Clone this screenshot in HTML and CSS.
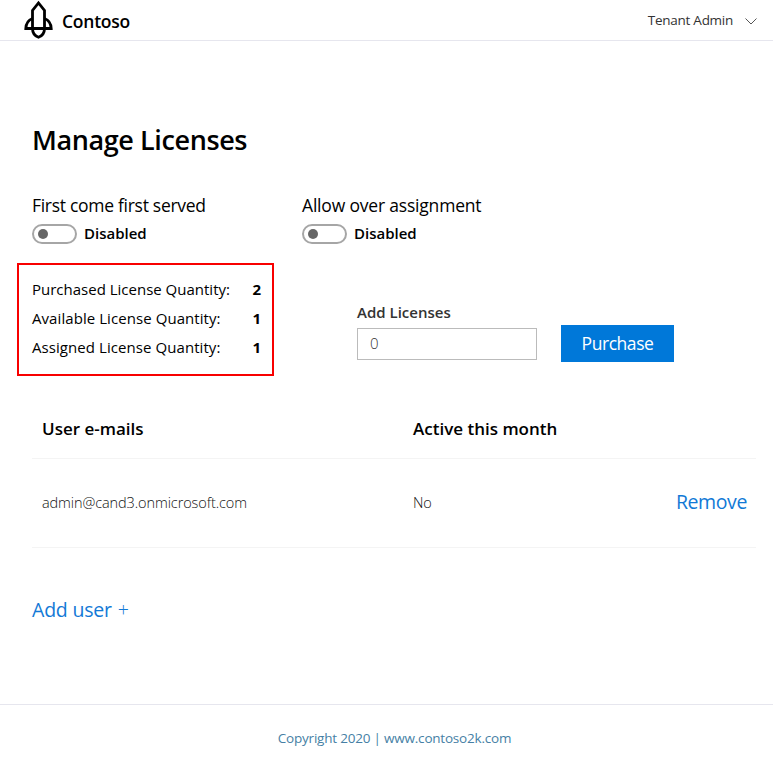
FILE: index.html
```html
<!DOCTYPE html>
<html lang="en">
<head>
<meta charset="utf-8">
<title>Manage Licenses</title>
<link rel="stylesheet" href="styles.css">
</head>
<body>
<header class="topbar">
  <div class="brand">
    <svg class="logo" width="30" height="40" viewBox="0 0 30 40" fill="none" stroke="#000" stroke-width="2.8">
      <path d="M8.500 28.500V10.500L14.500 3L20.500 10.500V28.500"/>
      <path d="M8.500 18.500C4.500 20 2 24 1.800 28.500H27.200C27 24 24.500 20 20.500 18.500"/>
      <path d="M8.500 28.500C8.500 33 11 36 14.500 37.300C18 36 20.500 33 20.500 28.500"/>
    </svg>
    <span class="brand-name">Contoso</span>
  </div>
  <div class="account">
    <span class="account-name">Tenant Admin</span>
    <svg width="12" height="7" viewBox="0 0 12 7" fill="none" stroke="#555" stroke-width="1"><path d="M0.500 0.500L6 6L11.500 0.500"/></svg>
  </div>
</header>
<main class="page">
  <h1 class="title">Manage Licenses</h1>
  <section class="settings">
    <div class="setting">
      <div class="setting-label">First come first served</div>
      <div class="toggle-row"><div class="toggle"></div><span class="toggle-text">Disabled</span></div>
    </div>
    <div class="setting">
      <div class="setting-label setting-label-wide">Allow over assignment</div>
      <div class="toggle-row"><div class="toggle"></div><span class="toggle-text">Disabled</span></div>
    </div>
  </section>
  <section class="licenses">
    <dl class="quantities">
      <div class="quantity"><dt>Purchased License Quantity:</dt><dd>2</dd></div>
      <div class="quantity quantity-wide"><dt>Available License Quantity:</dt><dd>1</dd></div>
      <div class="quantity quantity-wide"><dt>Assigned License Quantity:</dt><dd>1</dd></div>
    </dl>
    <div class="add">
      <label class="add-label" for="count">Add Licenses</label>
      <input class="add-input" id="count" type="text" value="0">
    </div>
    <button class="purchase" type="button">Purchase</button>
  </section>
  <section class="users">
    <div class="row head"><span>User e-mails</span><span>Active this month</span></div>
    <div class="row user"><span>admin@cand3.onmicrosoft.com</span><span>No</span><a class="remove">Remove</a></div>
  </section>
  <a class="add-user"><span>Add user</span><span class="plus">+</span></a>
</main>
<footer class="footer">Copyright 2020 | www.contoso2k.com</footer>
</body>
</html>
```
FILE: styles.css
```css
* { box-sizing: border-box; }
body { margin: 0; height: 770px; display: flex; flex-direction: column; background: #fff; color: #000; font-family: "Open Sans", "Noto Sans", sans-serif; overflow: hidden; }
.topbar { height: 41px; border-bottom: 1px solid #e6e6ee; display: flex; justify-content: space-between; padding: 0 16px 0 24px; }
.brand, .account { display: flex; align-items: center; }
.brand { gap: 8px; }
.brand-name { font-size: 17.5px; font-weight: 550; letter-spacing: -0.25px; padding-top: 1px; }
.account { gap: 12px; color: #333; font-size: 13.5px; }
.account svg { margin-top: 2px; }
.account-name { letter-spacing: -0.27px; }
.page { flex: 1; padding: 79px 17px 0; }
.title { margin: 0 0 0 15px; font-size: 27px; line-height: 40px; font-weight: 550; letter-spacing: -0.4px; }
.settings { display: flex; margin: 32px 0 0 15px; }
.setting { width: 270px; }
.setting-label { font-size: 17.5px; line-height: 26px; letter-spacing: -0.29px; }
.setting-label-wide { letter-spacing: -0.19px; }
.toggle-row { display: flex; align-items: center; gap: 7px; height: 20px; margin-top: 6px; }
.toggle { width: 45px; height: 20px; border: 2px solid #a6a6a6; border-radius: 10px; padding: 3px 4px; }
.toggle::before { content: ""; display: block; width: 10px; height: 10px; border-radius: 50%; background: #666; }
.toggle-text { font-size: 15px; font-weight: 600; padding-bottom: 3px; }
.licenses { display: flex; margin-top: 19px; height: 113px; }
.quantities { width: 257px; border: 2px solid #f80000; margin: 0; padding: 10px 11px 0 13px; font-size: 15px; line-height: 29px; }
.quantity { display: flex; justify-content: space-between; }
.quantity-wide dt { letter-spacing: 0.07px; }
.quantity dd { margin: 0; font-weight: 700; }
.add { width: 180px; margin: 39px 24px 0 83px; }
.add-label { display: block; height: 26px; font-size: 15px; line-height: 20px; font-weight: 600; color: #333; }
.add-input { display: block; width: 180px; height: 32px; border: 1px solid #bbb; padding: 0 12px 2px; font: 300 15px "Open Sans", sans-serif; color: #333; }
.purchase { width: 113px; height: 37px; margin-top: 62px; border: 0; padding: 0 0 2px; background: #0078d9; color: #fff; font: 400 17.5px "Open Sans", sans-serif; letter-spacing: -0.45px; }
.users { margin: 23px 0 0 15px; }
.row { display: grid; grid-template-columns: 371px 1fr auto; align-items: center; padding: 0 9px 0 10px; border-bottom: 1px solid #f4f4f4; }
.head { height: 60px; font-size: 17px; font-weight: 600; }
.user { height: 89px; padding-bottom: 1px; font-size: 14.5px; font-weight: 300; letter-spacing: -0.1px; color: #111; }
.remove { font-size: 19.5px; font-weight: 400; letter-spacing: -0.4px; color: #1279d6; padding-bottom: 2px; }
.add-user { display: inline-flex; gap: 6px; margin: 48px 0 0 15px; font-size: 19.5px; line-height: 28px; letter-spacing: -0.2px; color: #1279d6; }
.plus { font-weight: 300; }
.footer { height: 66px; border-top: 1px solid #e6e6ee; display: flex; align-items: center; justify-content: center; font-size: 13.5px; letter-spacing: -0.21px; color: #467fa5; padding-left: 16px; }
```
